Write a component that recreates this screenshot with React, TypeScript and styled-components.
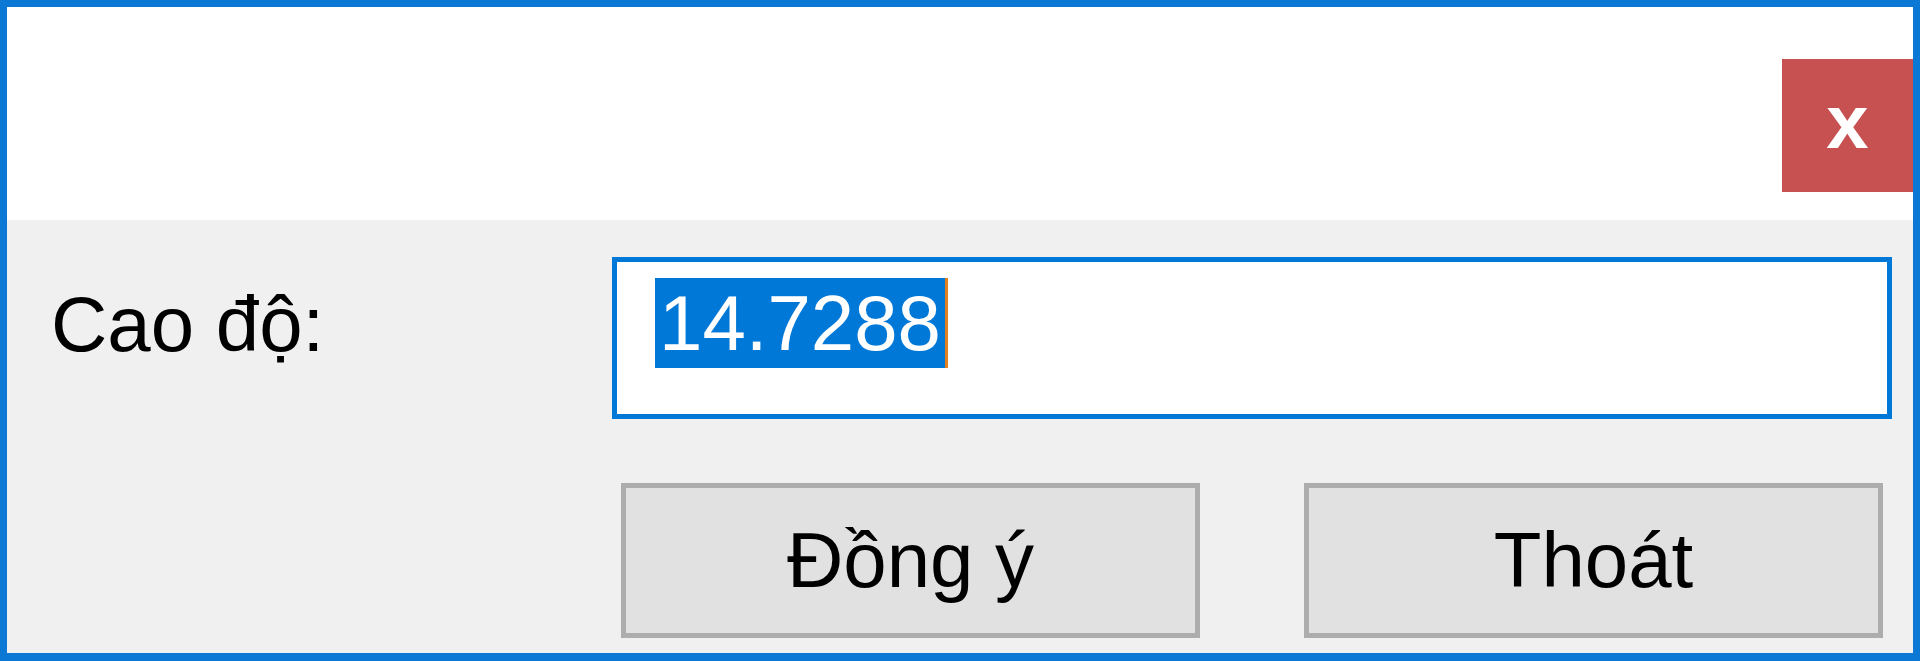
import React from "react";
import styled, { createGlobalStyle } from "styled-components";

const Global = createGlobalStyle`
  html, body { margin: 0; padding: 0; background: #ffffff; }
  body { font-family: "Liberation Sans", Arial, sans-serif; }
  * { box-sizing: border-box; }
`;

const Window = styled.div`
  width: 1920px;
  height: 661px;
  border: 7px solid #0b78d6;
  border-bottom-width: 8px;
  display: flex;
  flex-direction: column;
  background: #f0f0f0;
  overflow: hidden;
`;

const TitleBar = styled.div`
  height: 213px;
  background: #ffffff;
  display: flex;
  justify-content: flex-end;
  align-items: flex-start;
  padding-top: 52px;
  flex-shrink: 0;
`;

const CloseButton = styled.button`
  width: 131px;
  height: 133px;
  border: none;
  margin: 0;
  padding: 0 0 8px 0;
  background: #c75050;
  color: #ffffff;
  font-family: "Liberation Sans", Arial, sans-serif;
  font-weight: 700;
  font-size: 76px;
  line-height: 1;
  display: flex;
  align-items: center;
  justify-content: center;
  cursor: default;
`;

const Content = styled.div`
  flex: 1;
  display: grid;
  grid-template-columns: 561px 1fr;
  grid-template-rows: 162px auto;
  row-gap: 64px;
  padding: 37px 21px 0 44px;
  font-size: 78px;
  color: #000000;
`;

const Label = styled.div`
  align-self: start;
  margin-top: 22px;
  line-height: 90px;
  white-space: nowrap;
`;

const TextField = styled.div`
  border: 5px solid #0078d7;
  background: #ffffff;
  padding: 16px 0 0 38px;
  display: flex;
  align-items: flex-start;
`;

const Selected = styled.span`
  background: #0078d7;
  color: #ffffff;
  line-height: 90px;
  height: 90px;
  padding: 0 4px;
  white-space: nowrap;
`;

const Caret = styled.span`
  width: 3px;
  height: 90px;
  background: #e0801e;
`;

const ButtonRow = styled.div`
  grid-column: 2;
  display: flex;
  justify-content: space-between;
  padding: 0 9px;
`;

const DialogButton = styled.button`
  width: 579px;
  height: 155px;
  background: #e1e1e1;
  border: 5px solid #adadad;
  margin: 0;
  padding: 0;
  font-family: "Liberation Sans", Arial, sans-serif;
  font-size: 78px;
  color: #000000;
  display: flex;
  align-items: center;
  justify-content: center;
  cursor: default;
`;

export default function App() {
  return (
    <>
      <Global />
      <Window>
        <TitleBar>
          <CloseButton aria-label="Close">x</CloseButton>
        </TitleBar>
        <Content>
          <Label>Cao độ:</Label>
          <TextField>
            <Selected>14.7288</Selected>
            <Caret />
          </TextField>
          <ButtonRow>
            <DialogButton>Đồng ý</DialogButton>
            <DialogButton>Thoát</DialogButton>
          </ButtonRow>
        </Content>
      </Window>
    </>
  );
}
